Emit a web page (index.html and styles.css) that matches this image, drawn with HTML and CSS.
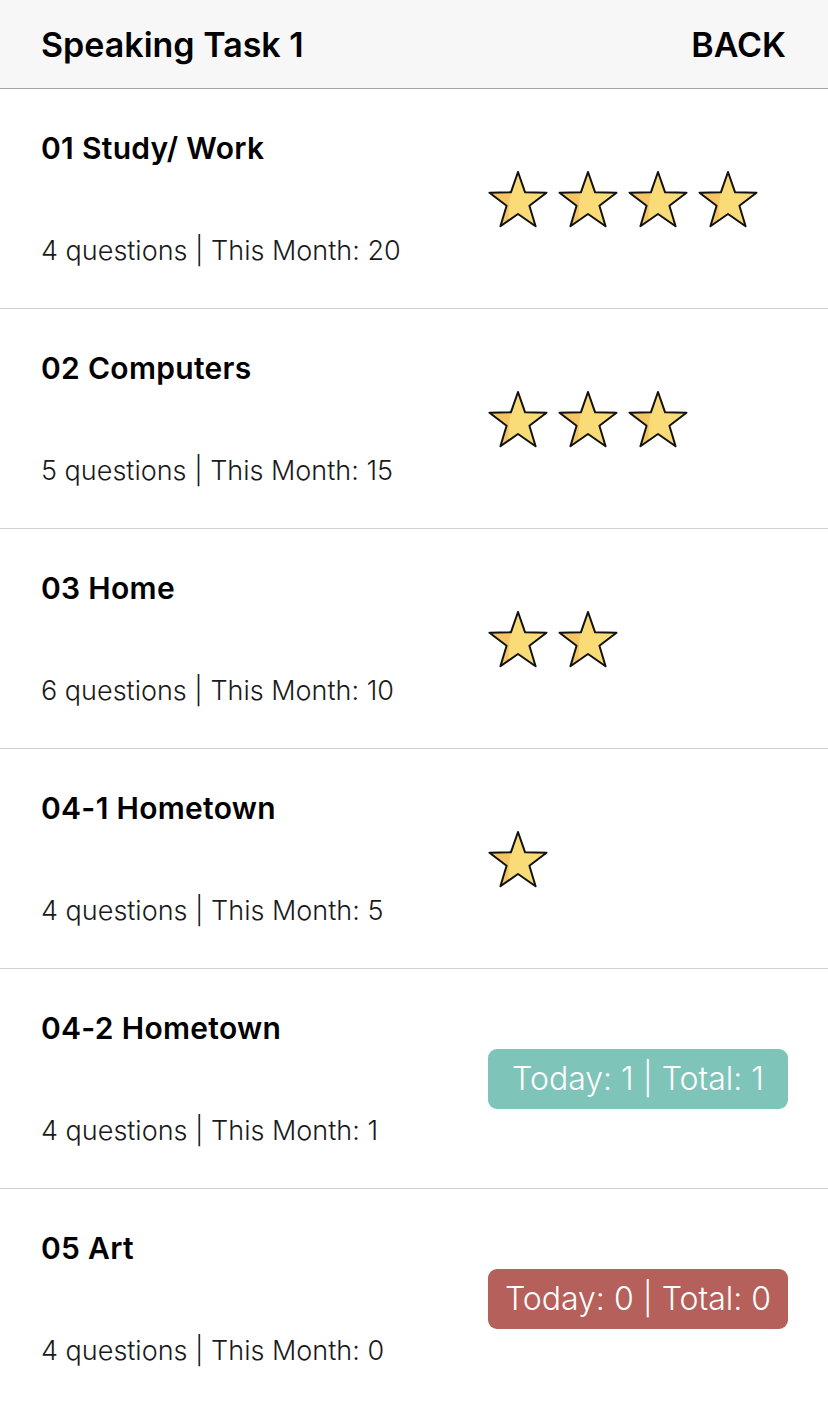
FILE: index.html
```html
<!DOCTYPE html>
<html>
<head>
<meta charset="utf-8">
<link rel="stylesheet" href="styles.css">
</head>
<body>
<svg width="0" height="0" class="defs">
  <defs>
    <symbol id="star" viewBox="0 0 60 60">
      <clipPath id="starclip">
        <polygon points="30,3 37.1,23.3 58.5,23.7 41.4,36.7 47.6,57.3 30,45 12.4,57.3 18.6,36.7 1.5,23.7 22.9,23.3"/>
      </clipPath>
      <polygon points="30,3 37.1,23.3 58.5,23.7 41.4,36.7 47.6,57.3 30,45 12.4,57.3 18.6,36.7 1.5,23.7 22.9,23.3" fill="#f9dc78"/>
      <path d="M0,0 L30,0 C24,14 19,34 21,60 L0,60 Z" fill="#f4c562" clip-path="url(#starclip)"/>
      <polygon points="30,3 37.1,23.3 58.5,23.7 41.4,36.7 47.6,57.3 30,45 12.4,57.3 18.6,36.7 1.5,23.7 22.9,23.3" fill="none" stroke="#111" stroke-width="2" stroke-linejoin="round"/>
    </symbol>
  </defs>
</svg>
<header class="topbar">
  <h1 class="title">Speaking Task 1</h1>
  <span class="back">BACK</span>
</header>
<main class="list">
  <div class="row">
    <div class="info">
      <div class="name">01 Study/ Work</div>
      <div class="meta">4 questions | This Month: 20</div>
    </div>
    <div class="side">
      <div class="stars">
        <svg class="star"><use href="#star"/></svg>
        <svg class="star"><use href="#star"/></svg>
        <svg class="star"><use href="#star"/></svg>
        <svg class="star"><use href="#star"/></svg>
      </div>
    </div>
  </div>
  <div class="row">
    <div class="info">
      <div class="name">02 Computers</div>
      <div class="meta">5 questions | This Month: 15</div>
    </div>
    <div class="side">
      <div class="stars">
        <svg class="star"><use href="#star"/></svg>
        <svg class="star"><use href="#star"/></svg>
        <svg class="star"><use href="#star"/></svg>
      </div>
    </div>
  </div>
  <div class="row">
    <div class="info">
      <div class="name">03 Home</div>
      <div class="meta">6 questions | This Month: 10</div>
    </div>
    <div class="side">
      <div class="stars">
        <svg class="star"><use href="#star"/></svg>
        <svg class="star"><use href="#star"/></svg>
      </div>
    </div>
  </div>
  <div class="row">
    <div class="info">
      <div class="name">04-1 Hometown</div>
      <div class="meta">4 questions | This Month: 5</div>
    </div>
    <div class="side">
      <div class="stars">
        <svg class="star"><use href="#star"/></svg>
      </div>
    </div>
  </div>
  <div class="row">
    <div class="info">
      <div class="name">04-2 Hometown</div>
      <div class="meta">4 questions | This Month: 1</div>
    </div>
    <div class="side">
      <div class="badge badge-green">Today: 1 | Total: 1</div>
    </div>
  </div>
  <div class="row">
    <div class="info">
      <div class="name">05 Art</div>
      <div class="meta">4 questions | This Month: 0</div>
    </div>
    <div class="side">
      <div class="badge badge-red">Today: 0 | Total: 0</div>
    </div>
  </div>
</main>
</body>
</html>
```

FILE: styles.css
```css
html, body {
  margin: 0;
  padding: 0;
  background: #ffffff;
}
body {
  width: 828px;
  height: 1405px;
  overflow: hidden;
  font-family: Inter, "Noto Sans", sans-serif;
  color: #000;
}
.defs {
  position: absolute;
  width: 0;
  height: 0;
}
.topbar {
  height: 88px;
  background: #f7f7f7;
  border-bottom: 1px solid #a6a6a6;
  display: flex;
  align-items: center;
  justify-content: space-between;
  padding: 0 42px 0 41px;
}
.title {
  margin: 0;
  font-size: 34px;
  font-weight: 600;
  letter-spacing: 0;
}
.back {
  font-size: 34px;
  font-weight: 600;
  letter-spacing: 0;
}
.row {
  height: 219px;
  border-bottom: 1px solid #d2d2d2;
  display: flex;
  align-items: stretch;
}
.row:last-child {
  border-bottom: none;
}
.info {
  width: 488px;
  padding-left: 41px;
  padding-top: 41px;
  box-sizing: border-box;
  display: flex;
  flex-direction: column;
  gap: 69px;
}
.name {
  font-size: 30px;
  font-weight: 600;
  line-height: 36px;
  letter-spacing: 0.3px;
}
.meta {
  font-size: 27px;
  font-weight: 300;
  line-height: 32px;
  color: #1a1a1a;
}
.side {
  flex: 1;
  display: flex;
  align-items: center;
}
.stars {
  display: flex;
  gap: 10px;
}
.star {
  width: 60px;
  height: 60px;
}
.badge {
  width: 300px;
  height: 60px;
  border-radius: 9px;
  color: #fff;
  font-size: 32px;
  font-weight: 300;
  display: flex;
  align-items: center;
  justify-content: center;
}
.badge-green {
  background: #7fc4b9;
}
.badge-red {
  background: #b5605a;
}
```
